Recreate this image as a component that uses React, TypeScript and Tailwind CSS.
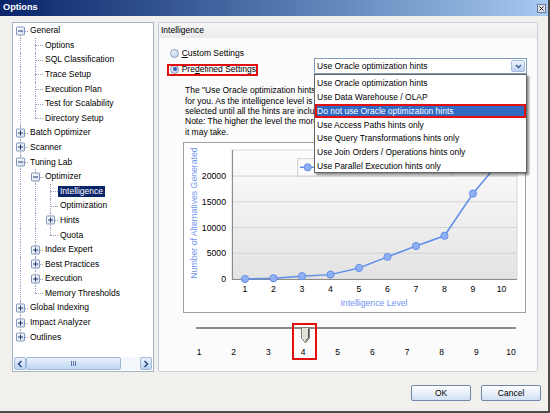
import React from "react";

type Node = { label: string; kids?: Node[]; plus?: boolean; sel?: boolean };
type Row = { node: Node; guides: boolean[]; first: boolean; last: boolean };

const tree: Node[] = [
  {
    label: "General",
    kids: [
      { label: "Options" },
      { label: "SQL Classification" },
      { label: "Trace Setup" },
      { label: "Execution Plan" },
      { label: "Test for Scalability" },
      { label: "Directory Setup" },
    ],
  },
  { label: "Batch Optimizer", plus: true },
  { label: "Scanner", plus: true },
  {
    label: "Tuning Lab",
    kids: [
      {
        label: "Optimizer",
        kids: [
          { label: "Intelligence", sel: true },
          { label: "Optimization" },
          { label: "Hints", plus: true },
          { label: "Quota" },
        ],
      },
      { label: "Index Expert", plus: true },
      { label: "Best Practices", plus: true },
      { label: "Execution", plus: true },
      { label: "Memory Thresholds" },
    ],
  },
  { label: "Global Indexing", plus: true },
  { label: "Impact Analyzer", plus: true },
  { label: "Outlines", plus: true },
];

function flatten(nodes: Node[], guides: boolean[], out: Row[]) {
  nodes.forEach((n, i) => {
    const last = i === nodes.length - 1;
    out.push({ node: n, guides, first: guides.length === 0 && i === 0, last });
    if (n.kids) flatten(n.kids, [...guides, !last], out);
  });
  return out;
}

const rows = flatten(tree, [], []);

const options = [
  "Use Oracle optimization hints",
  "Use Data Warehouse / OLAP",
  "Do not use Oracle optimization hints",
  "Use Access Paths hints only",
  "Use Query Transformations hints only",
  "Use Join Orders / Operations hints only",
  "Use Parallel Execution hints only",
];

const data = [0, 150, 550, 850, 2150, 4300, 6400, 8400, 16600, 23200];

function Expander({ plus }: { plus: boolean }) {
  return (
    <span className="absolute left-[3px] top-1/2 -translate-y-1/2 w-[9px] h-[9px] border border-[#8197bd] rounded-[1px] bg-linear-to-br from-white to-[#d3dcea]">
      <svg width="7" height="7" className="block">
        <path d="M1 3.5H6" stroke="#1f3a6e" />
        {plus && <path d="M3.5 1V6" stroke="#1f3a6e" />}
      </svg>
    </span>
  );
}

function TreeRow({ r }: { r: Row }) {
  const n = r.node;
  const line = "border-dotted border-[#9c9cc0]";
  return (
    <div className="flex h-[14.6px]">
      {r.guides.map((g, i) => (
        <span key={i} className="relative w-[15px] shrink-0">
          {g && <span className={`absolute left-[7px] top-0 bottom-0 border-l ${line}`} />}
        </span>
      ))}
      <span className="relative w-[15px] shrink-0">
        <span
          className={`absolute left-[7px] border-l ${line} ${
            r.first ? "top-1/2 bottom-0" : r.last ? "top-0 h-1/2" : "top-0 bottom-0"
          }`}
        />
        <span className={`absolute left-[7px] right-0 top-1/2 border-t ${line}`} />
        {(n.kids || n.plus) && <Expander plus={!n.kids} />}
      </span>
      <span
        className={`self-center px-[2px] leading-[11px] whitespace-nowrap ${
          n.sel ? "bg-[#0a246a] text-white" : ""
        }`}
      >
        {n.label}
      </span>
    </div>
  );
}

function ScrollBtn({ dir }: { dir: "l" | "r" }) {
  return (
    <span className="w-[12px] shrink-0 rounded-[2px] border border-[#9fb8da] bg-linear-to-b from-[#eaf2fc] to-[#bcd3f0] flex items-center justify-center">
      <svg width="6" height="8">
        <path d={dir === "l" ? "M4.5 1L1.5 4L4.5 7" : "M1.5 1L4.5 4L1.5 7"} stroke="#2a4a80" strokeWidth="1.5" fill="none" />
      </svg>
    </span>
  );
}

function Radio({ checked, children }: { checked?: boolean; children: React.ReactNode }) {
  return (
    <div className="flex items-center h-[12px] gap-[2.7px]">
      <span className="w-[9px] h-[9px] rounded-full border border-[#8a9bb4] bg-linear-to-br from-[#f4f8fd] to-[#bccfe8] flex items-center justify-center">
        {checked && <span className="w-[4px] h-[4px] rounded-full bg-[#2f62b8]" />}
      </span>
      <span className="whitespace-nowrap">{children}</span>
    </div>
  );
}

function Chart() {
  const px = (i: number) => 61 + 28.5 * i;
  const py = (v: number) => 136 - v * 0.005148;
  const pts = data.map((v, i) => `${px(i)},${py(v)}`).join(" ");
  return (
    <div className="ml-[24px] mt-[4.7px] w-[343px] h-[171px] border border-[#a0a0a0] bg-white">
      <svg width="341" height="169" className="block" fontFamily="Liberation Sans, Arial, sans-serif">
        <defs>
          <linearGradient id="plotbg" x1="0" y1="0" x2="0" y2="1">
            <stop offset="0" stopColor="#fdfdfd" />
            <stop offset="1" stopColor="#e3e3e3" />
          </linearGradient>
        </defs>
        <rect x="48" y="7" width="285" height="129" fill="url(#plotbg)" stroke="#d6d6d6" />
        {[5000, 10000, 15000, 20000].map((v) => (
          <line key={v} x1="48" x2="333" y1={py(v)} y2={py(v)} stroke="#d2d2d2" />
        ))}
        <line x1="48.5" y1="7" x2="48.5" y2="137" stroke="#8c8c8c" />
        <line x1="48" y1="136.5" x2="333" y2="136.5" stroke="#8c8c8c" />
        {[0, 5000, 10000, 15000, 20000].map((v) => (
          <text key={v} x="42" y={py(v) + 3} textAnchor="end" fontSize="8.7" fill="#000">
            {v}
          </text>
        ))}
        {data.map((_, i) => (
          <text key={i} x={px(i)} y="149" textAnchor="middle" fontSize="8.7" fill="#000">
            {i + 1}
          </text>
        ))}
        <text x="190" y="163" textAnchor="middle" fontSize="8.7" fill="#6f93ee">
          Intelligence Level
        </text>
        <text transform="translate(12.5 70) rotate(-90)" textAnchor="middle" fontSize="8.7" fill="#6f93ee">
          Number of Alternatives Generated
        </text>
        <polyline points={pts} fill="none" stroke="#5f8de8" strokeWidth="1.5" />
        {data.map((v, i) => (
          <circle key={i} cx={px(i)} cy={py(v)} r="3.6" fill="#8fb0f5" stroke="#6690e6" />
        ))}
        {/* legend, mostly hidden under the open combo list */}
        <rect x="113.7" y="15.7" width="154" height="17.3" fill="#fafafa" stroke="#cfcfcf" />
        <line x1="116" x2="131" y1="24.3" y2="24.3" stroke="#5f8de8" strokeWidth="1.5" />
        <circle cx="123.7" cy="24.3" r="3.6" fill="#8fb0f5" stroke="#6690e6" />
      </svg>
    </div>
  );
}

export default function App() {
  return (
    <div className="w-[550px] h-[413px] overflow-hidden flex flex-col bg-[#f1f0ec] border-r-2 border-b-2 border-[#4a4a4a] font-['Liberation_Sans',Arial,sans-serif] text-[8.5px] text-black">
      {/* title bar */}
      <div className="h-[16px] shrink-0 flex items-center justify-between pl-[3px] pr-[2.3px] bg-linear-to-r from-[#0a246a] to-[#a6caf0]">
        <span className="text-[9.2px] font-bold text-white leading-none">Options</span>
        <span className="w-[9px] h-[9px] border border-[#6a7a98] bg-[#dfe3ea] flex items-center justify-center">
          <svg width="5" height="5">
            <path d="M0.5 0.5L4.5 4.5M4.5 0.5L0.5 4.5" stroke="#222" />
          </svg>
        </span>
      </div>

      <div className="flex gap-[4px] mt-[6px] ml-[12px]">
        {/* tree */}
        <div className="w-[142px] h-[350px] shrink-0 flex flex-col border border-[#a3b3c8] bg-white">
          <div className="flex-1 overflow-hidden pt-[0.4px]">
            {rows.map((r, i) => (
              <TreeRow key={i} r={r} />
            ))}
          </div>
          <div className="h-[13px] mx-[1px] mb-[1px] flex">
            <ScrollBtn dir="l" />
            <span className="w-[95px] shrink-0 rounded-[2px] border border-[#9fb8da] bg-linear-to-b from-[#eaf2fc] to-[#c0d6f1] flex items-center justify-center">
              <svg width="5" height="5">
                <path d="M0.5 0V5M2.5 0V5M4.5 0V5" stroke="#5a78a8" />
              </svg>
            </span>
            <span className="flex-1 bg-[#f3f7fc]" />
            <ScrollBtn dir="r" />
          </div>
        </div>

        {/* intelligence panel */}
        <div className="w-[380px] h-[350px] shrink-0 flex flex-col rounded-[2px] border border-[#c6cfd9] bg-[#fbfbfb]">
          <div className="h-[15px] shrink-0 flex items-center pl-[2px] bg-linear-to-b from-[#f7f7f7] to-[#e9e9e9]">
            Intelligence
          </div>
          <div className="relative flex-1">
            <div className="flex items-end">
              <div className="w-[155px] shrink-0 pt-[9px] pl-[11px] flex flex-col gap-[4.3px]">
                <Radio>
                  <span className="underline">C</span>ustom Settings
                </Radio>
                <div className="relative">
                  <Radio checked>
                    Pre<span className="underline">d</span>efined Settings
                  </Radio>
                  <span className="absolute left-[-3.3px] top-[1px] w-[91px] h-[11.7px] border-2 border-[#e01010]" />
                </div>
              </div>
              <div className="relative z-10 mb-[1.3px] w-[213px] h-[16px]">
                <div className="h-full flex items-center border border-[#7f9db9] bg-white pl-[2px]">
                  <span className="flex-1 whitespace-nowrap">Use Oracle optimization hints</span>
                  <span className="w-[14px] h-[12px] mr-[1px] rounded-[2px] border border-[#a3bbe0] bg-linear-to-b from-[#eef3fd] to-[#bcd1f0] flex items-center justify-center">
                    <svg width="7" height="5">
                      <path d="M1 1L3.5 3.5L6 1" stroke="#3a5a95" strokeWidth="1.4" fill="none" />
                    </svg>
                  </span>
                </div>
                <div className="absolute left-0 top-[16px] w-[213px] h-[99.3px] pt-[1.3px] border border-[#646464] bg-white shadow-[2px_2px_2px_rgba(0,0,0,0.45)]">
                  {options.map((o, i) => (
                    <div
                      key={o}
                      className={`relative h-[13.9px] flex items-center pl-[2px] whitespace-nowrap ${
                        i === 2 ? "bg-[#316ac5] text-white" : ""
                      }`}
                    >
                      {o}
                      {i === 2 && <span className="absolute inset-0 border-2 border-[#e01010]" />}
                    </div>
                  ))}
                </div>
              </div>
            </div>

            {/* description, cut off where the open list lies over it */}
            <div className="mt-[10.2px] ml-[26px] w-[129px] overflow-hidden leading-[10.3px] whitespace-nowrap">
              <div>The "Use Oracle optimization hints" option will generate the hints</div>
              <div>for you. As the intelligence level is increased, more hints are</div>
              <div>selected until all the hints are included.</div>
              <div>Note: The higher the level the more alternatives generated, the longer</div>
              <div>it may take.</div>
            </div>

            <Chart />

            {/* slider */}
            <div className="relative ml-[36.7px] mt-[14.3px] w-[320px] h-[16px]">
              <div className="mt-[5.3px] h-[2px] bg-[#8a8a8a]" />
              <svg width="9" height="17" className="absolute left-[105.3px] top-0">
                <path d="M0.5 0.5H8.5V11L4.5 16L0.5 11Z" fill="#e4e1d8" stroke="#7d7d7d" />
                <path d="M7.5 1.5V10.6L4.5 14.3" stroke="#4d4d4d" fill="none" />
              </svg>
              <span className="absolute left-[96px] top-[-3.7px] w-[25.6px] h-[36.7px] border-2 border-[#e01010]" />
            </div>
            <div className="ml-[22.7px] mt-[3.7px] w-[346.7px] grid grid-cols-10 text-center text-[8.5px] leading-[10px]">
              {Array.from({ length: 10 }, (_, i) => (
                <span key={i}>{i + 1}</span>
              ))}
            </div>
          </div>
        </div>
      </div>

      <div className="flex justify-end gap-[10.7px] pr-[7.3px] mt-[13px]">
        {["OK", "Cancel"].map((b) => (
          <button
            key={b}
            className="w-[59.3px] h-[16px] rounded-[2px] border border-[#7189a8] bg-linear-to-b from-white to-[#d2e1f3] text-[8.5px] leading-none"
          >
            {b}
          </button>
        ))}
      </div>
    </div>
  );
}
